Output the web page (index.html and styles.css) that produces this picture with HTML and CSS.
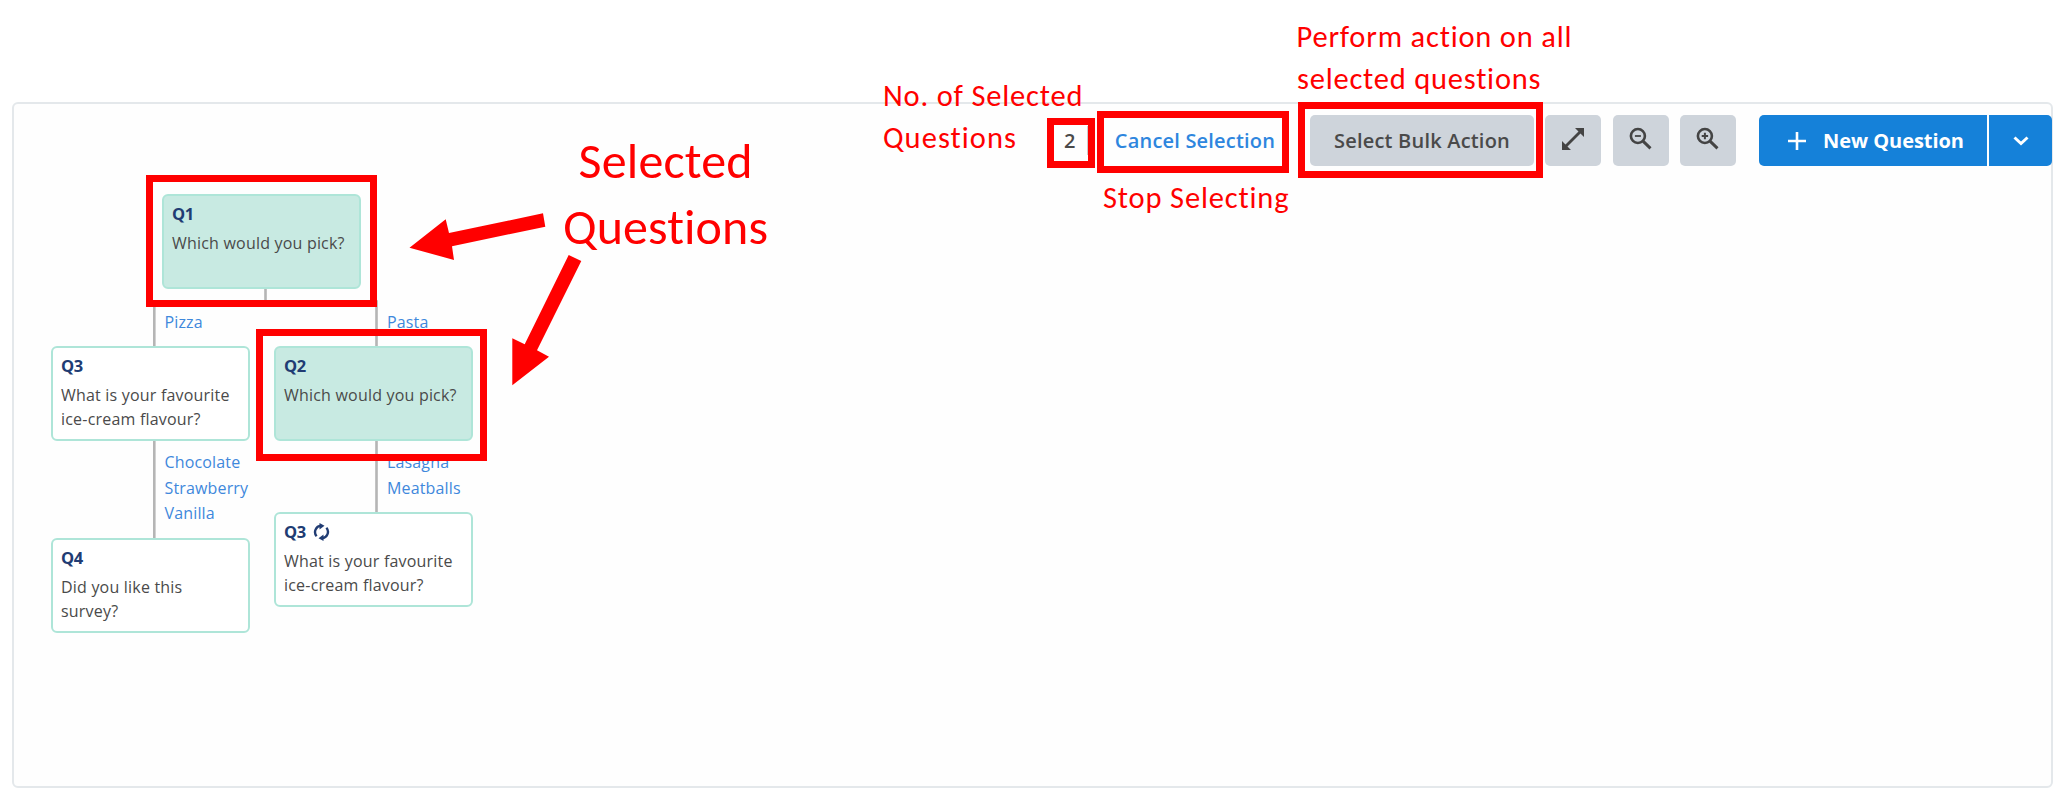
FILE: index.html
```html
<!DOCTYPE html>
<html lang="en">
<head>
<meta charset="utf-8">
<title>Survey builder</title>
<link rel="stylesheet" href="styles.css">
</head>
<body>
<main class="panel">
  <header class="toolbar">
    <span class="count">2</span>
    <button class="link">Cancel Selection</button>
    <button class="btn bulk">Select Bulk Action</button>
    <button class="btn icon" aria-label="Expand"><svg width="24" height="24" viewBox="0 0 24 24"><path d="M5 19 19 5" stroke="#444" stroke-width="2.8"/><path d="M14 1H23v9zM1 14V23h9z" fill="#444"/></svg></button>
    <button class="btn icon" aria-label="Zoom out"><svg width="24" height="24" viewBox="0 0 24 24"><circle cx="8.900" cy="9" r="7" fill="none" stroke="#444" stroke-width="2.600"/><path d="M14 14.200 21.500 21.300" stroke="#444" stroke-width="3"/><path d="M5.900 9h6" stroke="#444" stroke-width="1.8"/></svg></button>
    <button class="btn icon" aria-label="Zoom in"><svg width="24" height="24" viewBox="0 0 24 24"><circle cx="8.900" cy="9" r="7" fill="none" stroke="#444" stroke-width="2.600"/><path d="M14 14.200 21.500 21.300" stroke="#444" stroke-width="3"/><path d="M5.700 9h6.400M8.900 5.800v6.400" stroke="#444" stroke-width="2"/></svg></button>
    <div class="split">
      <button class="primary new"><svg width="18" height="18" viewBox="0 0 18 18"><path d="M9 0v18M0 9h18" stroke="#fff" stroke-width="2.6"/></svg><span>New Question</span></button>
      <button class="primary more" aria-label="More"><svg width="16" height="10" viewBox="0 0 16 10"><path d="m1.5 1.5 6.5 6 6.5-6" fill="none" stroke="#fff" stroke-width="3"/></svg></button>
    </div>
  </header>
</main>

<section class="canvas">
  <svg class="layer" width="2069" height="800" viewBox="0 0 2069 800">
    <path d="M265.5 289v13M154.3 346v-44.500H376.500V346M154.300 441v98M376.500 441v72" fill="none" stroke="#b5b5b5" stroke-width="2.600"/>
  </svg>
  <article class="node q1 selected"><h3>Q1</h3><p>Which would you pick?</p></article>
  <article class="node q3"><h3>Q3</h3><p>What is your favourite<br>ice-cream flavour?</p></article>
  <article class="node q2 selected"><h3>Q2</h3><p>Which would you pick?</p></article>
  <article class="node q4"><h3>Q4</h3><p>Did you like this<br>survey?</p></article>
  <article class="node q3-repeat"><h3>Q3 <svg width="17" height="18" viewBox="0 0 17 18"><path d="M8 2.800A6.300 6.300 0 0 0 3.600 13.200M9 15.200A6.300 6.300 0 0 0 13.400 4.800" fill="none" stroke="#213c73" stroke-width="2.400"/><path d="M6.500 0l5 2.800-5 3.700zM10.500 18l-5-2.800 5-3.700z" fill="#213c73"/></svg></h3><p>What is your favourite<br>ice-cream flavour?</p></article>
  <ul class="answers pizza"><li>Pizza</li></ul>
  <ul class="answers pasta"><li>Pasta</li></ul>
  <ul class="answers flavours"><li>Chocolate</li><li>Strawberry</li><li>Vanilla</li></ul>
  <ul class="answers dishes"><li>Lasagna</li><li>Meatballs</li></ul>

  <svg class="layer notes" width="2069" height="800" viewBox="0 0 2069 800">
    <g class="frames">
      <rect x="149.500" y="178.500" width="224" height="125"/>
      <rect x="259.500" y="332.500" width="224" height="125"/>
      <rect x="1050.500" y="121.500" width="41" height="43"/>
      <rect x="1100.500" y="114.500" width="185" height="55"/>
      <rect x="1301.500" y="105.500" width="238" height="69"/>
    </g>
    <path d="M409.500 247.700 445.700 219.300 449 233 543 213.300 545.300 226.700 452 246.300 454 260zM512.300 385.300V338.300L524.700 344.300 568.700 255 581.300 261 537 350.300 549 356.700z"/>
    <g class="large">
      <text x="578.500" y="177.500" textLength="174">Selected</text>
      <text x="563" y="243.500" textLength="205">Questions</text>
    </g>
    <g class="small">
      <text x="883" y="105.500" textLength="199.500">No. of Selected</text>
      <text x="883" y="147.500" textLength="133">Questions</text>
      <text x="1103" y="207.500" textLength="185.500">Stop Selecting</text>
      <text x="1296.500" y="46.500" textLength="275">Perform action on all</text>
      <text x="1297" y="88.500" textLength="243.500">selected questions</text>
    </g>
  </svg>
</section>
</body>
</html>
```
FILE: styles.css
```css
* { box-sizing: border-box; }
body {
  margin: 0;
  width: 2069px;
  height: 800px;
  padding: 102px 0 0 12px;
  overflow: hidden;
  background: #fff;
  color: #4a4a4a;
  font-family: "Open Sans", sans-serif;
}
.panel {
  width: 2041px;
  height: 686px;
  border: 2px solid #e4e8eb;
  border-radius: 6px;
  background: #fefefe;
}
.toolbar {
  display: flex;
  justify-content: flex-end;
  align-items: center;
  height: 51px;
  margin: 11px -1px 0 0;
}
button { border: 0; padding: 0; font: inherit; color: inherit; background: none; }
.count {
  width: 24px;
  height: 29px;
  margin-right: 26px;
  border-right: 1px solid #ccc;
  font-size: 20px;
  font-weight: 600;
  line-height: 29px;
}
.link { width: 162px; margin-right: 34px; color: #2e86de; font-size: 20px; font-weight: 600; letter-spacing: 0.200px; white-space: nowrap; }
.btn {
  display: flex;
  align-items: center;
  justify-content: center;
  height: 51px;
  border-radius: 5px;
  background: #ced4db;
}
.bulk { width: 224px; margin-right: 11px; font-size: 20px; font-weight: 600; letter-spacing: 0.200px; white-space: nowrap; }
.icon { width: 56px; margin-right: 11.500px; padding-bottom: 3px; }
.split { display: flex; gap: 2px; height: 51px; margin-left: 11.500px; }
.primary { display: flex; align-items: center; background: #1581d9; color: #fff; }
.new { width: 228px; gap: 17px; padding-left: 29px; border-radius: 5px 0 0 5px; font-size: 20px; font-weight: 700; letter-spacing: -0.050px; white-space: nowrap; }
.more { width: 63px; justify-content: center; border-radius: 0 5px 5px 0; }
.canvas, .layer { position: absolute; left: 0; top: 0; }
.node {
  position: absolute;
  width: 199px;
  height: 95px;
  padding: 5px 8px;
  border: 2px solid #aee5d8;
  border-radius: 6px;
  background: #fff;
}
.node.selected { background: #c8eae2; }
.node h3 { display: flex; align-items: center; gap: 7px; margin: 0; color: #213c73; font-size: 16.500px; line-height: 26px; font-weight: 700; letter-spacing: -0.300px; }
.node p { margin: 4px 0 0; font-size: 16px; line-height: 24.300px; letter-spacing: 0.200px; white-space: nowrap; }
.q1 { left: 162px; top: 194px; }
.q2 { left: 274px; top: 346px; }
.q3 { left: 51px; top: 346px; }
.q4 { left: 51px; top: 538px; }
.q3-repeat { left: 274px; top: 512px; }
.answers { position: absolute; margin: 0; padding: 0; list-style: none; color: #3f88dc; font-size: 16px; line-height: 25.700px; letter-spacing: 0.150px; }
.pizza { left: 164.500px; top: 309.500px; }
.pasta { left: 387px; top: 309.500px; }
.flavours { left: 164.500px; top: 450px; }
.dishes { left: 387px; top: 450px; }
.notes { fill: #f00; font-family: Carlito, Calibri, Lato, sans-serif; font-variant-ligatures: none; }
.frames rect { fill: none; stroke: #f00; stroke-width: 7px; }
.large { font-size: 50px; }
.small { font-size: 30.500px; }
```
